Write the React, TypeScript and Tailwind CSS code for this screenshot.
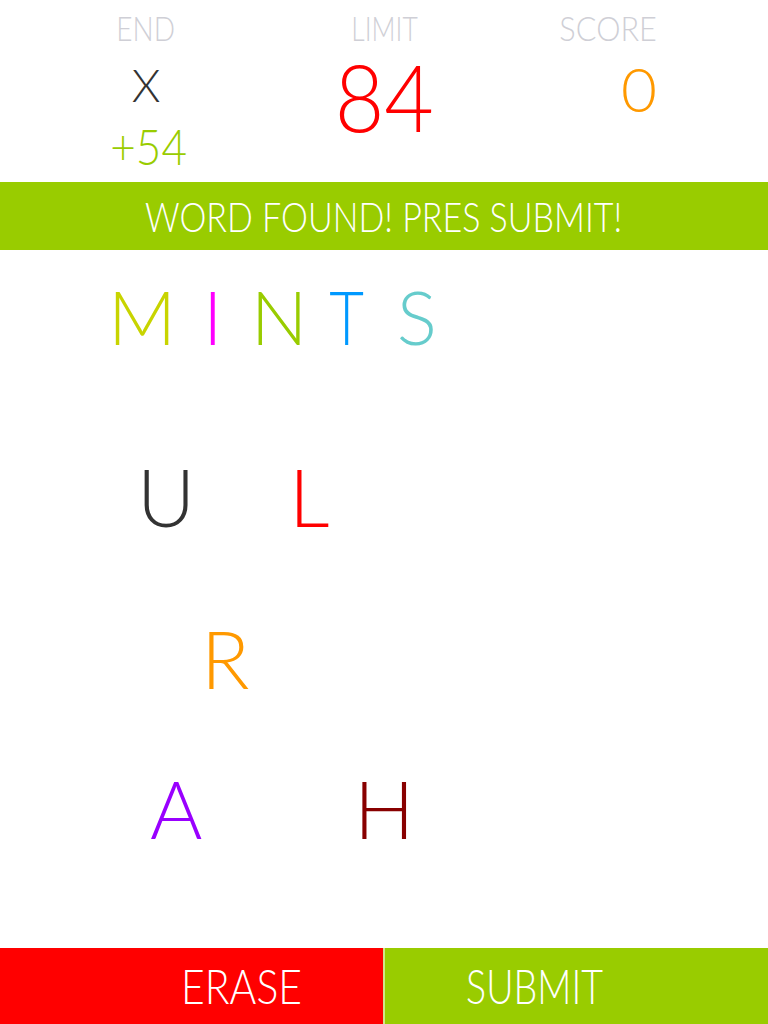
import React from "react";

const font = { fontFamily: "Lato, 'Open Sans', sans-serif" };

export default function App() {
  return (
    <div className="w-[768px] h-[1024px] bg-white flex flex-col overflow-hidden font-light" style={font}>
      {/* header */}
      <div className="h-[182px] flex">
        <div className="ml-[46px] w-[200px] flex flex-col items-center pt-[12px]">
          <div className="text-[33px] leading-none text-[#cfcfd6] scale-x-[0.85]">END</div>
          <div className="mt-[17px] text-[46px] leading-none text-[#333333]">X</div>
          <div className="mt-[14px] ml-[6px] text-[49px] leading-none text-[#99cc00] scale-x-[0.9]">+54</div>
        </div>
        <div className="ml-[38px] w-[200px] flex flex-col items-center pt-[12px]">
          <div className="text-[33px] leading-none text-[#cfcfd6] scale-x-[0.8]">LIMIT</div>
          <div className="mt-[6px] text-[92px] leading-none text-[#ff0000] scale-x-[0.93]">84</div>
        </div>
        <div className="ml-auto mr-[111px] flex flex-col items-end pt-[12px]">
          <div className="text-[33px] leading-none text-[#cfcfd6] scale-x-[0.93] origin-right">SCORE</div>
          <div className="mt-[12px] text-[62px] leading-none text-[#ff9900]">0</div>
        </div>
      </div>

      {/* banner */}
      <div className="h-[68px] bg-[#99cc00] flex items-center justify-center">
        <span className="inline-block text-[42px] leading-none text-white scale-x-[0.81]">WORD FOUND! PRES SUBMIT!</span>
      </div>

      {/* board */}
      <div className="relative flex-1">
        <div className="flex items-start pt-[29px] pl-[108px] text-[75px] leading-none">
          <span className="text-[#c8d400]">M</span>
          <span className="ml-[27px] text-[#ff00ff]">I</span>
          <span className="ml-[28px] text-[#99cc00]">N</span>
          <span className="ml-[18px] text-[#0099ff] inline-block scale-x-[0.8]">T</span>
          <span className="ml-[28px] text-[#66cccc]">S</span>
        </div>
        <span className="absolute left-[137px] top-[206px] text-[80px] leading-none text-[#333333]">U</span>
        <span className="absolute left-[289px] top-[206px] text-[80px] leading-none text-[#ff0000]">L</span>
        <span className="absolute left-[201px] top-[368px] text-[80px] leading-none text-[#ff9900]">R</span>
        <span className="absolute left-[150px] top-[518px] text-[80px] leading-none text-[#9900ff]">A</span>
        <span className="absolute left-[354px] top-[518px] text-[80px] leading-none text-[#880000]">H</span>
      </div>

      {/* buttons */}
      <div className="h-[76px] flex">
        <div className="w-[383px] bg-[#ff0000] flex items-center justify-start pl-[172px]">
          <span className="inline-block text-[47px] leading-none text-white scale-x-[0.87]">ERASE</span>
        </div>
        <div className="w-[2px] bg-[#cfe68a]"></div>
        <div className="flex-1 bg-[#99cc00] flex items-center justify-start pl-[64px]">
          <span className="inline-block text-[47px] leading-none text-white scale-x-[0.8]">SUBMIT</span>
        </div>
      </div>
    </div>
  );
}
